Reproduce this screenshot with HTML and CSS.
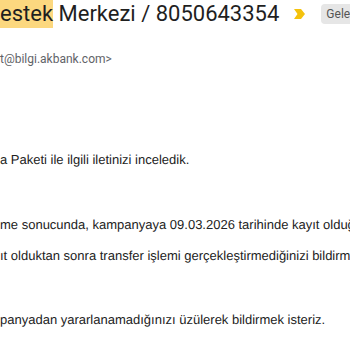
FILE: index.html
```html
<!DOCTYPE html>
<html lang="tr">
<head>
    <meta charset="UTF-8">
    <title>Destek Merkezi / 8050643354</title>
    <link rel="stylesheet" href="styles.css">
</head>
<body>

<div class="mail">
    <div class="subject-row">
        <h2 class="subject"><span class="hl">estek</span> Merkezi / 8050643354</h2>
        <svg class="important" width="12" height="10" viewBox="0 0 12 10">
            <path d="M0 0 H7 L11 5 L7 10 H0 L3.5 5 Z" fill="#f4c20d"/>
        </svg>
        <span class="label">Gelen kutusu</span>
    </div>

    <div class="sender">t@bilgi.akbank.com&gt;</div>

    <div class="body">
        <p class="line">a Paketi ile ilgili iletinizi inceledik.</p>
        <p class="line gap">me sonucunda, kampanyaya 09.03.2026 tarihinde kayıt olduğunuz</p>
        <p class="line">ıt olduktan sonra transfer işlemi gerçekleştirmediğinizi bildirmek</p>
        <p class="line gap">panyadan yararlanamadığınızı üzülerek bildirmek isteriz.</p>
    </div>
</div>

</body>
</html>
```

FILE: styles.css
```css
* {
    box-sizing: border-box;
    margin: 0;
    padding: 0;
}
html, body {
    width: 350px;
    height: 350px;
    overflow: hidden;
    background-color: #fff;
}
.mail {
    width: 600px;
}
.subject-row {
    display: flex;
    align-items: center;
    height: 28px;
}
.subject {
    font-family: Roboto, "Open Sans", sans-serif;
    font-size: 22px;
    font-weight: 400;
    color: #1f1f1f;
    line-height: 28px;
    white-space: nowrap;
}
.hl {
    background-color: #fcd87f;
    display: inline-block;
    line-height: 28px;
}
.important {
    margin-left: 15px;
}
.label {
    margin-left: 15px;
    background-color: #e6e6e6;
    color: #555;
    font-family: Roboto, sans-serif;
    font-size: 12px;
    padding: 3px 5px;
    border-radius: 4px;
    white-space: nowrap;
}
.sender {
    margin-top: 24px;
    font-family: Roboto, sans-serif;
    font-size: 12px;
    color: #5f6368;
    white-space: nowrap;
}
.body {
    margin-top: 86px;
    font-family: "Liberation Sans", Arial, sans-serif;
    font-size: 13px;
    color: #222;
    text-rendering: geometricPrecision;
}
.line {
    white-space: nowrap;
    line-height: 15px;
    margin-top: 16px;
}
.line:first-child {
    margin-top: 0;
}
.line.gap {
    margin-top: 50px;
}
.line.gap:last-child {
    margin-top: 49px;
}
```
